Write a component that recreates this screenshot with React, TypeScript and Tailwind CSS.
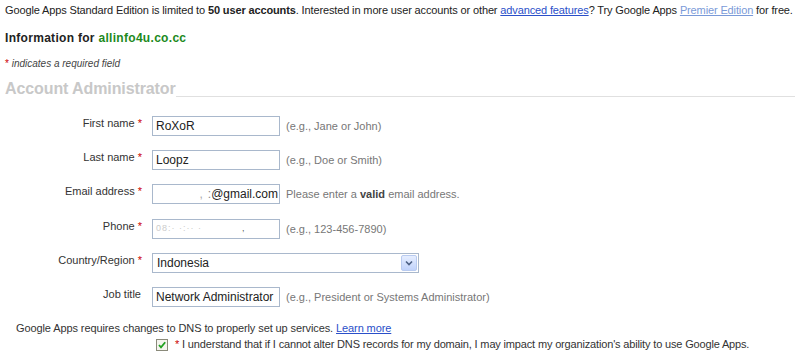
import React from 'react';

const font = { fontFamily: '"Liberation Sans", Arial, sans-serif' };

function Field({
  label,
  required = true,
  children,
  hint,
}: {
  label: string;
  required?: boolean;
  children: React.ReactNode;
  hint?: React.ReactNode;
}) {
  return (
    <div className="flex h-[34.2px] items-start">
      <div className="w-[145px] shrink-0 pr-[3px] pt-[1px] text-right text-[11px] leading-[13px] text-[#333]">
        {label}
        {required ? <span className="text-[#c00]"> *</span> : <span className="pr-[1px]" />}
      </div>
      <div className="ml-[7px] flex items-start">
        {children}
        {hint && <div className="ml-[6px] text-[11px] leading-[20px] text-[#777]">{hint}</div>}
      </div>
    </div>
  );
}

function TextBox({ value }: { value: React.ReactNode }) {
  return (
    <div className="flex h-[20px] w-[128px] items-center border border-[#a9b8cc] bg-white px-[3px] text-[12px] text-[#222]">
      {value}
    </div>
  );
}

export default function App() {
  return (
    <div className="h-[364px] w-[800px] overflow-hidden bg-white text-[#222]" style={font}>
      <div className="px-[5px] pt-[4px] text-[11px] leading-[13px] tracking-[-0.13px] whitespace-nowrap">
        Google Apps Standard Edition is limited to <b>50 user accounts</b>. Interested in more user accounts or
        other <span className="text-[#2a4fc9] underline">advanced features</span>? Try Google Apps{' '}
        <span className="text-[#7a9ad8] underline">Premier Edition</span> for free.
      </div>

      <div className="mt-[14px] px-[5px] text-[12px] font-bold leading-[15px] tracking-[0.3px]">
        Information for <span className="text-[#1d8a1d]">allinfo4u.co.cc</span>
      </div>

      <div className="mt-[12px] px-[5px] text-[10px] italic leading-[12px] text-[#444]">
        <span className="not-italic text-[#c00]">*</span> indicates a required field
      </div>

      <div className="mt-[10px] flex items-end pl-[5px] pr-[5px]">
        <span className="text-[16px] font-bold leading-[18px] tracking-[-0.1px] text-[#c8c8c8]">
          Account Administrator
        </span>
        <div className="mb-[1px] h-[1px] flex-1 bg-[#e0e0e0]" />
      </div>

      <div className="mt-[18px]">
        <Field label="First name" hint="(e.g., Jane or John)">
          <TextBox value="RoXoR" />
        </Field>
        <Field label="Last name" hint="(e.g., Doe or Smith)">
          <TextBox value="Loopz" />
        </Field>
        <Field
          label="Email address"
          hint={
            <span>
              Please enter a <b className="text-[#444]">valid</b> email address.
            </span>
          }
        >
          <div className="flex h-[20px] w-[128px] items-center justify-end border border-[#a9b8cc] bg-white px-[1px] text-[12px] text-[#222]">
            <span className="mr-[5px] text-[#aaa]">,</span>
            <span className="text-[#888]">:</span>@gmail.com
          </div>
        </Field>
        <Field label="Phone" hint="(e.g., 123-456-7890)">
          <div className="flex h-[20px] w-[128px] items-center border border-[#a9b8cc] bg-white px-[3px] text-[9px] tracking-[1px] text-[#ccc]">
            08:· ·:·· ·<span className="ml-[40px] text-[#555]">,</span>
          </div>
        </Field>
        <Field label="Country/Region">
          <div className="flex h-[20px] w-[267px] items-center border border-[#a9b8cc] bg-white pl-[4px] text-[12px] text-[#222]">
            <span className="flex-1">Indonesia</span>
            <div className="m-[1px] flex h-[16px] w-[16px] items-center justify-center rounded-[2px] border border-[#b9cbf0] bg-gradient-to-b from-[#e6eeff] to-[#c1d3fb]">
              <svg width="8" height="6" viewBox="0 0 8 6">
                <path d="M1 1.5 L4 4.5 L7 1.5" fill="none" stroke="#4d6185" strokeWidth="1.6" />
              </svg>
            </div>
          </div>
        </Field>
        <Field label="Job title" required={false} hint="(e.g., President or Systems Administrator)">
          <TextBox value="Network Administrator" />
        </Field>
      </div>

      <div className="mt-[1px] pl-[16px] text-[11px] leading-[13px] tracking-[-0.1px] text-[#333]">
        Google Apps requires changes to DNS to properly set up services.{' '}
        <span className="text-[#2a4fc9] underline">Learn more</span>
      </div>
      <div className="mt-[3px] flex items-center pl-[156px] text-[11px] leading-[13px] tracking-[-0.16px] text-[#333]">
        <svg width="12" height="12" viewBox="0 0 12 12" className="shrink-0">
          <rect x="0.5" y="0.5" width="11" height="11" fill="#f4f4ee" stroke="#8a8a7a" />
          <path d="M3 6 L5 8.3 L9.2 3.2" fill="none" stroke="#21a121" strokeWidth="1.8" />
        </svg>
        <span className="ml-[7px]">
          <span className="text-[#c00]">*</span> I understand that if I cannot alter DNS records for my domain, I may
          impact my organization's ability to use Google Apps.
        </span>
      </div>
    </div>
  );
}
